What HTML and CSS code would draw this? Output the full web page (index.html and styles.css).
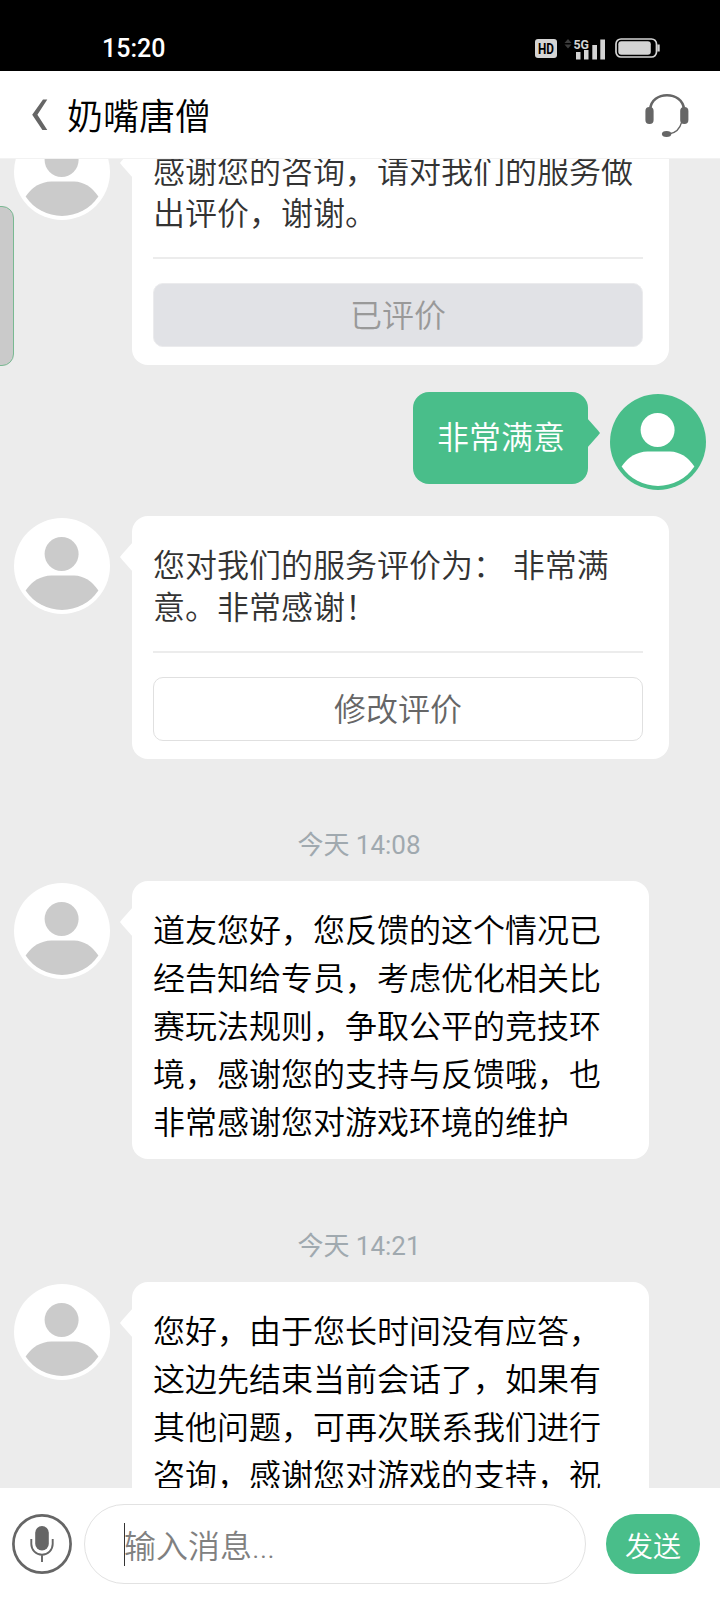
FILE: index.html
```
<!DOCTYPE html>
<html lang="zh-CN">
<head>
<meta charset="UTF-8">
<title>奶嘴唐僧</title>
<link rel="stylesheet" href="styles.css">
</head>
<body>
<svg class="defs" width="0" height="0" aria-hidden="true">
  <symbol id="person" viewBox="0 0 96 96">
    <circle cx="47.6" cy="36" r="17"/>
    <path d="M11.6 72.6Q21 58 37.500 57.400H60Q75 58 84.400 72.600A44 44 0 0 1 11.600 72.600Z"/>
  </symbol>
</svg>
<div class="phone">
  <header class="status">
    <span class="clock">15:20</span>
    <div class="status-icons">
      <svg class="hd" width="22" height="19" viewBox="0 0 22 19">
        <rect width="22" height="19" rx="3" fill="#d4d4d4"/>
        <text x="3" y="15" textLength="16" lengthAdjust="spacingAndGlyphs">HD</text>
      </svg>
      <svg class="signal" width="44" height="26" viewBox="0 0 44 26">
        <path d="M4 4L7.500 8H.5ZM4 13.500L7.500 9.500H.5Z" fill="#3c3c3c"/>
        <path d="M12 17h4.500v7.500H12zM20 15h4.500v9.500H20zM28.300 10H33v14.500h-4.700zM36.300 4.500H41v20h-4.700z" fill="#d4d4d4"/>
        <text x="9.500" y="13.500" class="net" textLength="15.500" lengthAdjust="spacingAndGlyphs">5G</text>
      </svg>
      <svg class="battery" width="46" height="20" viewBox="0 0 46 20">
        <rect x="1" y="1" width="40.500" height="18" rx="5" fill="none" stroke="#d4d4d4" stroke-width="1.700"/>
        <rect x="3.300" y="3.300" width="32.500" height="13.400" rx="3" fill="#d4d4d4"/>
        <path d="M42.300 6.500h2.400v7h-2.400z" fill="#d4d4d4"/>
      </svg>
    </div>
  </header>
  <nav class="titlebar">
    <svg class="back" width="16" height="32" viewBox="0 0 16 32"><path d="M15.300.5H11L.2 15.700 10.400 31h4.900L5.400 15.700Z" fill="#666"/></svg>
    <h1>奶嘴唐僧</h1>
    <svg class="headset" width="44" height="44" viewBox="0 0 44 44">
      <path d="M5.200 16C6 7 13.500 2.200 22 2.200S38 7 39 16" fill="none" stroke="#666" stroke-width="2.600"/>
      <rect x=".4" y="14" width="8.200" height="17" rx="4" fill="#666"/>
      <rect x="35.200" y="14" width="8.200" height="17" rx="4" fill="#666"/>
      <path d="M36.700 29Q34 39.500 24 41" fill="none" stroke="#666" stroke-width="1.300"/>
      <ellipse cx="21.600" cy="41" rx="4.700" ry="2.900" fill="#666"/>
    </svg>
  </nav>
  <main class="chat">
    <div class="row first">
      <svg class="avatar agent"><use href="#person"/></svg>
      <section class="bubble card">
        <p>感谢您的咨询，请对我们的服务做<br>出评价，谢谢。</p>
        <button class="rate done">已评价</button>
      </section>
    </div>
    <div class="row mine">
      <section class="bubble reply">非常满意</section>
      <svg class="avatar me"><use href="#person"/></svg>
    </div>
    <div class="row second">
      <svg class="avatar agent"><use href="#person"/></svg>
      <section class="bubble card">
        <p>您对我们的服务评价为：&nbsp;非常满<br>意。非常感谢！</p>
        <button class="rate">修改评价</button>
      </section>
    </div>
    <time>今天 14:08</time>
    <div class="row">
      <svg class="avatar agent"><use href="#person"/></svg>
      <section class="bubble message">道友您好，您反馈的这个情况已<br>经告知给专员，考虑优化相关比<br>赛玩法规则，争取公平的竞技环<br>境，感谢您的支持与反馈哦，也<br>非常感谢您对游戏环境的维护</section>
    </div>
    <time class="later">今天 14:21</time>
    <div class="row">
      <svg class="avatar agent"><use href="#person"/></svg>
      <section class="bubble message">您好，由于您长时间没有应答，<br>这边先结束当前会话了，如果有<br>其他问题，可再次联系我们进行<br>咨询，感谢您对游戏的支持，祝</section>
    </div>
  </main>
  <footer class="composer">
    <svg class="mic" width="60" height="60" viewBox="0 0 60 60">
      <circle cx="30" cy="30" r="28.600" fill="none" stroke="#666" stroke-width="2.700"/>
      <rect x="23.200" y="12" width="13.600" height="24.500" rx="6.800" fill="#666"/>
      <path d="M19.300 25v5a10.700 10.700 0 0 0 21.400 0v-5M30 41v7" fill="none" stroke="#666" stroke-width="1.900"/>
    </svg>
    <div class="field"><span class="caret"></span><span class="placeholder">输入消息...</span></div>
    <button class="send">发送</button>
  </footer>
  <div class="edge-tab"></div>
</div>
</body>
</html>
```
FILE: styles.css
```
* { box-sizing: border-box; }
body { margin: 0; }
.defs { position: absolute; }
.phone {
  position: relative;
  width: 720px;
  height: 1600px;
  display: flex;
  flex-direction: column;
  overflow: hidden;
  background: #ececec;
  font-family: Roboto, "Noto Sans CJK SC", sans-serif;
  font-weight: 350;
}
button { font: inherit; display: block; padding: 0; }
.status {
  height: 71px;
  flex: none;
  background: #000;
  color: #fff;
  display: flex;
  justify-content: space-between;
  align-items: flex-start;
  padding: 33px 59px 0 102px;
}
.clock { font-size: 25px; line-height: 32px; font-weight: 500; }
.status-icons { display: flex; align-items: center; height: 30px; }
.hd { margin-top: 1px; font: 700 15px Roboto, sans-serif; }
.signal { margin: 0 7px; }
.net { font: 700 13.5px Roboto, sans-serif; fill: #d4d4d4; stroke: #000; stroke-width: 1.500px; paint-order: stroke; }
.titlebar {
  height: 88px;
  flex: none;
  background: #fff;
  border-bottom: 1px solid #f2f2f2;
  display: flex;
  align-items: center;
  padding: 0 31px 0 32px;
}
.titlebar h1 {
  margin: 0 0 0 19px;
  padding-top: 7px;
  flex: 1;
  font-size: 36px;
  line-height: 50px;
  font-weight: 350;
  color: #000;
}
.headset { margin-top: 1px; }
.back { margin-top: 1px; }
.chat {
  height: 1329px;
  flex: none;
  overflow: hidden;
  display: flex;
  flex-direction: column;
}
.row { display: flex; align-items: flex-start; gap: 22px; padding: 0 14px; flex: none; }
.first { margin-top: -37px; }
.mine { justify-content: flex-end; margin-top: 27px; }
.second { margin-top: 26px; }
.avatar { width: 96px; height: 96px; margin-top: 2px; border-radius: 50%; flex: none; }
.agent { background: #fff; fill: #cbcbcb; }
.me { background: #49be8a; fill: #fff; }
.bubble { position: relative; border-radius: 16px; background: #fff; font-size: 32px; }
.bubble::before {
  content: "";
  position: absolute;
  top: 26px;
  left: -12px;
  width: 13px;
  height: 30px;
  background: inherit;
  clip-path: polygon(100% 0, 15% 42%, 0 50%, 15% 58%, 100% 100%);
}
.card { width: 537px; height: 243px; padding: 29px 26px 0 21px; color: #333; }
.card p {
  margin: 0;
  height: 108px;
  line-height: 42px;
  white-space: nowrap;
  border-bottom: 2px solid #ececec;
}
.rate {
  width: 490px;
  height: 64px;
  margin-top: 24px;
  padding-top: 2px;
  border: 1px solid #e0e0e0;
  border-radius: 10px;
  background: #fff;
  color: #666;
  line-height: 60px;
}
.done { background: #e1e2e6; border-color: #ebebed; color: #999; }
.reply {
  width: 175px;
  height: 92px;
  padding-left: 24px;
  background: #49be8a;
  color: #fff;
  line-height: 92px;
}
.reply::before { left: auto; right: -12px; transform: scaleX(-1); }
time {
  height: 30px;
  flex: none;
  margin: 71px 0 21px;
  padding-right: 2px;
  text-align: center;
  color: #a0a9af;
  font-size: 26px;
  line-height: 30px;
  font-weight: 400;
}
.later { margin-top: 72px; }
.message {
  width: 517px;
  padding: 26px 0 12px 21px;
  color: #000;
  line-height: 48px;
  white-space: nowrap;
}
.composer {
  height: 112px;
  flex: none;
  background: #fff;
  display: flex;
  align-items: center;
  padding: 0 20px 0 12px;
}
.field {
  width: 502px;
  height: 80px;
  margin-left: 12px;
  border: 1px solid #e2e2e2;
  border-radius: 40px;
  display: flex;
  align-items: center;
  padding-left: 39px;
  color: #808080;
  font-size: 32px;
}
.caret { width: 1px; height: 43px; background: #333; }
.placeholder { margin-left: -1px; padding-bottom: 1px; }
.send {
  width: 94px;
  height: 60px;
  margin-left: auto;
  padding-top: 1px;
  border: 0;
  border-radius: 30px;
  background: #49be8a;
  color: #fff;
  font-size: 28px;
}
.edge-tab {
  position: absolute;
  left: -20px;
  top: 206px;
  width: 34px;
  height: 160px;
  border: 1px solid #79b992;
  border-radius: 12px;
  background: #cacaca;
}
```
